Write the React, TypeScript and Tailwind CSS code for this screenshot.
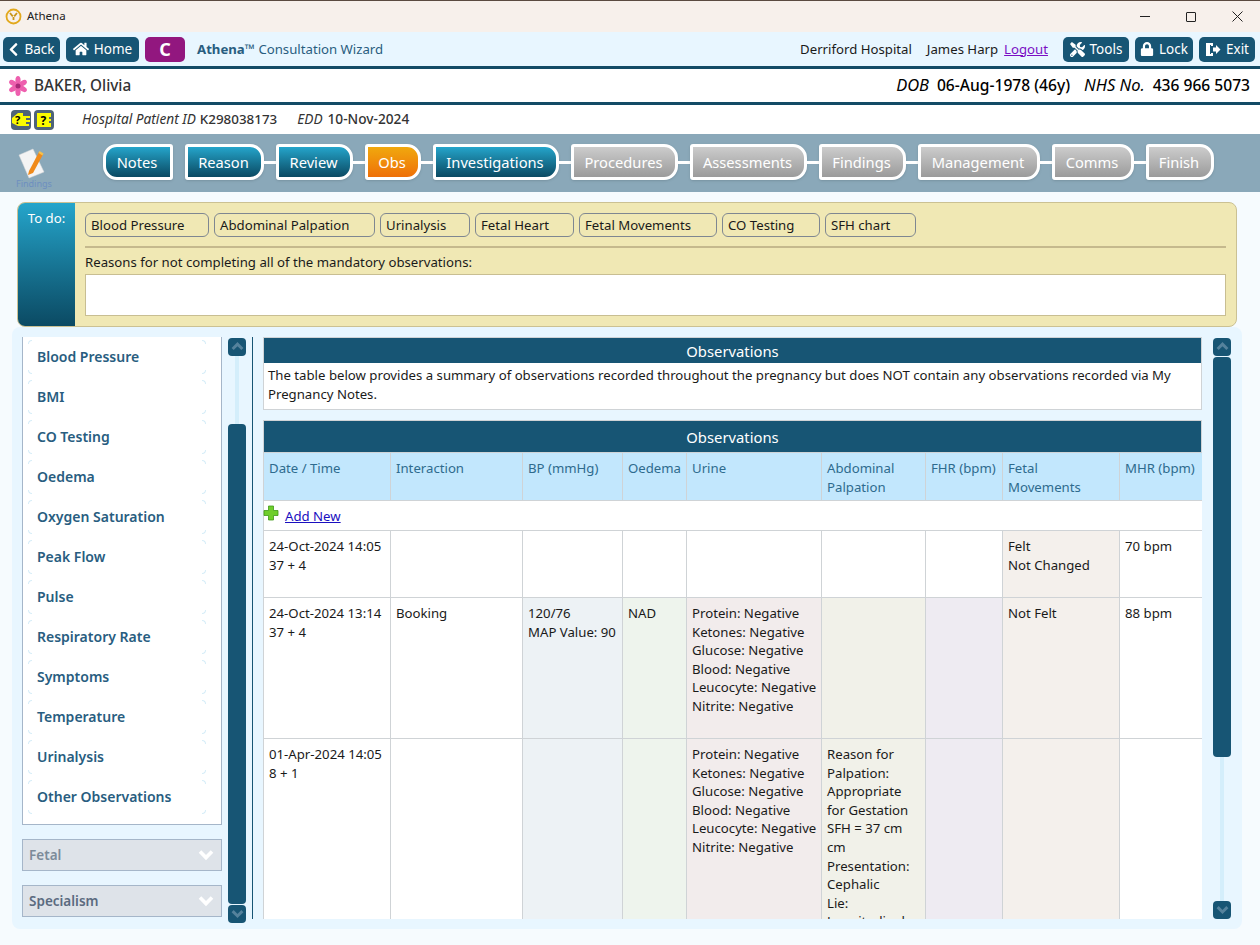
import React from 'react'
import { FaChevronLeft, FaHome, FaTools, FaLock } from 'react-icons/fa'

const teal = 'bg-linear-to-b from-[#25a5cb] to-[#0b4a63]'
const gray = 'bg-linear-to-b from-[#cccccc] to-[#9b9b9b]'
const orange = 'bg-linear-to-b from-[#f0a80e] to-[#ee6f08]'

const steps = [
    { label: 'Notes', w: 'w-[70px]', bg: teal, round: 'rounded-l-[14px] rounded-r-[3px]', line: false },
    { label: 'Reason', w: 'w-[79px]', bg: teal, round: 'rounded-r-[14px] rounded-l-[3px]', line: false },
    { label: 'Review', w: 'w-[77px]', bg: teal, round: 'rounded-r-[14px] rounded-l-[3px]', line: true },
    { label: 'Obs', w: 'w-[56px]', bg: orange, round: 'rounded-r-[14px] rounded-l-[3px]', line: true },
    { label: 'Investigations', w: 'w-[126px]', bg: teal, round: 'rounded-r-[14px] rounded-l-[3px]', line: true },
    { label: 'Procedures', w: 'w-[107px]', bg: gray, round: 'rounded-r-[14px] rounded-l-[3px]', line: true },
    { label: 'Assessments', w: 'w-[117px]', bg: gray, round: 'rounded-r-[14px] rounded-l-[3px]', line: true },
    { label: 'Findings', w: 'w-[87px]', bg: gray, round: 'rounded-r-[14px] rounded-l-[3px]', line: true },
    { label: 'Management', w: 'w-[122px]', bg: gray, round: 'rounded-r-[14px] rounded-l-[3px]', line: true },
    { label: 'Comms', w: 'w-[82px]', bg: gray, round: 'rounded-r-[14px] rounded-l-[3px]', line: true },
    { label: 'Finish', w: 'w-[68px]', bg: gray, round: 'rounded-r-[14px] rounded-l-[3px]', line: true },
]

const todos = [
    { label: 'Blood Pressure', w: 'w-[124px]' },
    { label: 'Abdominal Palpation', w: 'w-[161px]' },
    { label: 'Urinalysis', w: 'w-[90px]' },
    { label: 'Fetal Heart', w: 'w-[99px]' },
    { label: 'Fetal Movements', w: 'w-[138px]' },
    { label: 'CO Testing', w: 'w-[98px]' },
    { label: 'SFH chart', w: 'w-[91px]' },
]

const sideItems = ['Blood Pressure', 'BMI', 'CO Testing', 'Oedema', 'Oxygen Saturation', 'Peak Flow', 'Pulse', 'Respiratory Rate', 'Symptoms', 'Temperature', 'Urinalysis', 'Other Observations']

const urine = ['Protein: Negative', 'Ketones: Negative', 'Glucose: Negative', 'Blood: Negative', 'Leucocyte: Negative', 'Nitrite: Negative']

const Lines = ({ items }: { items: string[] }) => (
    <>
        {items.map((t) => (
            <div key={t} className="whitespace-nowrap">{t}</div>
        ))}
    </>
)

const ToolBtn = ({ w, children }: { w: string; children: React.ReactNode }) => (
    <button className={`${w} h-[25px] flex items-center justify-center gap-[5px] rounded-[5px] bg-[#175574] text-white text-[13.5px]`}>
        {children}
    </button>
)

// heavy chevron used on the scroll buttons and accordions
const Chevron = ({ down, w, color }: { down?: boolean; w: number; color: string }) => (
    <svg width={w} height={w * 0.7} viewBox="0 0 16 11" fill="none" stroke={color} strokeWidth="3.6">
        <path d={down ? 'M2 2.500l6 6 6-6' : 'M2 8.500l6-6 6 6'} />
    </svg>
)

const ScrollBtn = ({ down }: { down?: boolean }) => (
    <div className="w-[18px] h-[18px] shrink-0 rounded-[4px] bg-[#175574] flex items-center justify-center">
        <Chevron down={down} w={13} color="#55829c" />
    </div>
)

const Corner = ({ pos }: { pos: string }) => (
    <span className={`absolute w-[4px] h-[4px] border-[#d6edf8] ${pos}`} />
)

const SideItem = ({ label }: { label: string }) => (
    <div className="relative h-[34px] mb-[6px] ml-[5px] mr-[15px] pl-[9px] flex items-center text-[14px] font-semibold whitespace-nowrap text-[#285d80]">
        <Corner pos="top-0 left-0 border-t border-l rounded-tl-[4px]" />
        <Corner pos="top-0 right-0 border-t border-r rounded-tr-[4px]" />
        <Corner pos="bottom-0 left-0 border-b border-l rounded-bl-[4px]" />
        <Corner pos="bottom-0 right-0 border-b border-r rounded-br-[4px]" />
        {label}
    </div>
)

const Accordion = ({ label, color }: { label: string; color: string }) => (
    <div className={`h-[32px] mt-[14px] pl-[6px] pr-[7px] flex items-center justify-between bg-[#dee3e9] border border-[#a5b6c9] text-[13.5px] font-semibold ${color}`}>
        {label}
        <Chevron down w={16} color="#ffffff" />
    </div>
)

const th = 'border border-[#cfd3d6] px-[5px] pt-[6px] align-top font-normal text-left text-[#2e6b8e]'
const td = 'border border-[#cfd3d6] px-[5px] pt-[6px] align-top'

const App = () => {
    return (
        <div className="w-[1260px] h-[945px] overflow-hidden flex flex-col bg-[#f6fbfe] text-[13.2px] leading-[18.6px] text-[#1a1a1a] font-['Noto_Sans',sans-serif]">
            {/* title bar */}
            <div className="h-[32px] shrink-0 flex items-center bg-[#f7f0eb] border-t border-[#5b4a40] pl-[5px]">
                <svg width="17" height="17" viewBox="0 0 17 17" fill="none">
                    <circle cx="8.500" cy="8.500" r="7" stroke="#e2a81c" strokeWidth="1.800" />
                    <path d="M5 5l2.800 3.400M12 5L9.200 8.400M8.500 9v3" stroke="#c89416" strokeWidth="1.800" />
                </svg>
                <span className="ml-[5px] text-[11.5px] text-[#222]">Athena</span>
                <div className="ml-auto flex items-center text-[#222]">
                    <div className="w-[46px] flex justify-center"><div className="w-[10px] h-px bg-[#222]" /></div>
                    <div className="w-[46px] flex justify-center"><div className="w-[10px] h-[10px] border border-[#222] rounded-[1px]" /></div>
                    <div className="w-[46px] flex justify-center">
                        <svg width="11" height="11" viewBox="0 0 11 11" stroke="#222" strokeWidth="1"><path d="M.5.5l10 10M10.500.5l-10 10" /></svg>
                    </div>
                </div>
            </div>

            {/* toolbar */}
            <div className="h-[37px] shrink-0 flex items-center bg-[#e8f6ff] border-b-[3px] border-[#134b66] pl-[3px] pr-[5px]">
                <ToolBtn w="w-[57px]"><FaChevronLeft size={15} className="-mx-[2px]" />Back</ToolBtn>
                <div className="w-[6px]" />
                <ToolBtn w="w-[73px]"><FaHome size={16} />Home</ToolBtn>
                <div className="w-[6px]" />
                <button className="w-[40px] h-[25px] rounded-[5px] bg-[#92177f] text-white text-[18px] font-bold">C</button>
                <div className="ml-[12px] text-[#285d80]"><b className="font-bold">Athena™</b> Consultation Wizard</div>
                <div className="ml-auto">Derriford Hospital</div>
                <div className="ml-[15px]">James Harp</div>
                <a href="#" className="ml-[6px] mr-[15px] underline text-[#7a0fc4]">Logout</a>
                <ToolBtn w="w-[66px]"><FaTools size={15} />Tools</ToolBtn>
                <div className="w-[6px]" />
                <ToolBtn w="w-[58px]"><FaLock size={14} />Lock</ToolBtn>
                <div className="w-[6px]" />
                <ToolBtn w="w-[56px]">
                    <svg width="16" height="15" viewBox="0 0 16 15" fill="white">
                        <path d="M1 1h7v3H6V3H3.500v9H6v-1h2v3H1z" />
                        <path d="M2 2l3-1v13l-3-1z" />
                        <path d="M8 5.500h3V3l4.500 4.500L11 12V9.500H8z" />
                    </svg>
                    Exit
                </ToolBtn>
            </div>

            {/* patient */}
            <div className="h-[36px] shrink-0 flex items-center bg-white border-b-[3px] border-[#134b66] pl-[8px] pr-[10px] text-[15.6px]">
                <svg width="20" height="20" viewBox="0 0 20 20">
                    <g fill="#ee5fae">
                        <ellipse cx="10" cy="4.500" rx="2.600" ry="4.500" />
                        <ellipse cx="10" cy="4.500" rx="2.600" ry="4.500" transform="rotate(60 10 10)" />
                        <ellipse cx="10" cy="4.500" rx="2.600" ry="4.500" transform="rotate(120 10 10)" />
                        <ellipse cx="10" cy="4.500" rx="2.600" ry="4.500" transform="rotate(180 10 10)" />
                        <ellipse cx="10" cy="4.500" rx="2.600" ry="4.500" transform="rotate(240 10 10)" />
                        <ellipse cx="10" cy="4.500" rx="2.600" ry="4.500" transform="rotate(300 10 10)" />
                    </g>
                    <circle cx="10" cy="10" r="2.500" fill="#a82a78" />
                </svg>
                <span className="ml-[6px] text-[15.3px] font-medium text-[#333]">BAKER, Olivia</span>
                <div className="ml-auto flex items-center text-black">
                    <i className="mr-[8px] text-[16.5px]">DOB</i>
                    <span className="font-medium">06-Aug-1978 (46y)</span>
                    <i className="ml-[14px] mr-[8px] text-[16.5px]">NHS No.</i>
                    <span className="font-medium">436 966 5073</span>
                </div>
            </div>

            {/* info row */}
            <div className="h-[29px] shrink-0 flex items-center bg-white pl-[11px] text-[13.7px]">
                <svg width="20" height="20" viewBox="0 0 20 20">
                    <rect width="20" height="20" rx="4" fill="#4f6478" />
                    <path d="M1 8l6-5h5v3h7v2h-4v2h4v2h-4v2h3v2H7l-6-3z" fill="#fbfb00" />
                    <text x="4" y="14" fontSize="11" fontWeight="700" fill="#000">?</text>
                </svg>
                <svg width="20" height="20" viewBox="0 0 20 20" className="ml-[3px]">
                    <rect width="20" height="20" rx="4" fill="#4f6478" />
                    <path d="M3 3h14v4h-2v2h2v2h-2v2h2v4H3z" fill="#fbfb00" />
                    <text x="6.500" y="14.500" fontSize="12" fontWeight="700" fill="#000">?</text>
                </svg>
                <i className="ml-[28px] text-[#333]">Hospital Patient ID</i>
                <span className="ml-[4px] text-[13.4px] font-medium text-[#333]">K298038173</span>
                <i className="ml-[20px] text-[#333]">EDD</i>
                <span className="ml-[5px] font-medium text-[#333]">10-Nov-2024</span>
            </div>

            {/* wizard steps */}
            <div className="h-[58px] shrink-0 flex bg-[#8aa8b9] pl-[15px]">
                <div className="w-[88px] shrink-0 pt-[12px]">
                    <svg width="34" height="34" viewBox="0 0 34 34">
                        <path d="M4 9L18 3l11 23-15 6z" fill="#f4f4f4" stroke="#d8d8d8" strokeWidth=".5" />
                        <path d="M14 25L24 6l4 2.500L18 27l-5 2z" fill="#f08a1a" />
                        <path d="M23.500 7l1-2 4 2.500-1 2z" fill="#f6c04a" />
                    </svg>
                    <div className="ml-px text-[9px] leading-[10px] -mt-[1px] text-[#6d8fc0]">Findings</div>
                </div>
                <div className="flex items-start pt-[10px]">
                    {steps.map((s) => (
                        <React.Fragment key={s.label}>
                            <div className={`w-[12px] h-[3px] mt-[17px] ${s.line ? 'bg-white' : 'bg-transparent'} ${s.label === 'Notes' ? 'hidden' : ''}`} />
                            <div className={`${s.w} h-[36px] pr-[2px] flex items-center justify-center border-[3px] border-white shadow-sm text-white text-[14.7px] ${s.bg} ${s.round}`}>
                                {s.label}
                            </div>
                        </React.Fragment>
                    ))}
                </div>
            </div>

            {/* to do */}
            <div className="h-[125px] shrink-0 mt-[10px] ml-[17px] mr-[23px] flex rounded-[8px] overflow-hidden border border-[#cbc193] bg-[#f0e8b4]">
                <div className={`w-[57px] shrink-0 pt-[6px] text-center text-white ${teal}`}>To do:</div>
                <div className="flex-1 pl-[10px] pr-[10px] pt-[10px]">
                    <div className="flex gap-[5px]">
                        {todos.map((t) => (
                            <div key={t.label} className={`${t.w} h-[24px] pl-[5px] flex items-center rounded-[6px] border border-[#7f8791] text-[#1a1a1a]`}>
                                {t.label}
                            </div>
                        ))}
                    </div>
                    <div className="h-[2px] mt-[9px] bg-[#c5b98d]" />
                    <div className="mt-[3px] h-[23px] flex items-center">Reasons for not completing all of the mandatory observations:</div>
                    <div className="h-[42px] bg-white border border-[#c8be92]" />
                </div>
            </div>

            {/* main panel */}
            <div className="flex-1 min-h-0 ml-[12px] mr-[18px] mb-[16px] flex bg-[#e8f6ff] rounded-[8px] pt-[10px] pl-[10px]">
                <div className="w-[200px] shrink-0 flex flex-col">
                    <div className="h-[488px] pt-[3px] bg-white border-x border-b border-[#a5b6c9] overflow-hidden">
                        {sideItems.map((s) => (
                            <SideItem key={s} label={s} />
                        ))}
                    </div>
                    <Accordion label="Fetal" color="text-[#7c8b9a]" />
                    <Accordion label="Specialism" color="text-[#5b6b80]" />
                </div>

                <div className="w-[18px] shrink-0 ml-[6px] mt-px h-[585px] flex flex-col items-center">
                    <ScrollBtn />
                    <div className="w-[4px] h-[68px] bg-[#d4eefb]" />
                    <div className="w-[18px] h-[480px] rounded-[4px] bg-[#175574]" />
                    <div className="h-px" />
                    <ScrollBtn down />
                </div>

                <div className="w-px shrink-0 ml-[6px] h-[582px] bg-[#175574]" />

                <div className="w-[939px] shrink-0 ml-[10px] h-[582px] overflow-hidden">
                    <div className="bg-white border border-[#cfd3d6]">
                        <div className="h-[25px] bg-[#175574] text-white text-center text-[14.8px] leading-[27px]">Observations</div>
                        <div className="px-[4px] pt-[3px] h-[46px]">
                            The table below provides a summary of observations recorded throughout the pregnancy but does NOT contain any observations recorded via My Pregnancy Notes.
                        </div>
                    </div>

                    <div className="mt-[10px] bg-white">
                        <div className="h-[32px] bg-[#175574] border border-[#cfd3d6] border-b-0 text-white text-center text-[14.8px] leading-[33px]">Observations</div>
                        <table className="w-[939px] table-fixed border-collapse">
                            <colgroup>
                                <col className="w-[127px]" />
                                <col className="w-[132px]" />
                                <col className="w-[100px]" />
                                <col className="w-[64px]" />
                                <col className="w-[135px]" />
                                <col className="w-[104px]" />
                                <col className="w-[77px]" />
                                <col className="w-[117px]" />
                                <col className="w-[83px]" />
                            </colgroup>
                            <thead>
                                <tr className="h-[48px] bg-[#c2e7fd]">
                                    <th className={th}>Date / Time</th>
                                    <th className={th}>Interaction</th>
                                    <th className={th}>BP (mmHg)</th>
                                    <th className={th}>Oedema</th>
                                    <th className={th}>Urine</th>
                                    <th className={th}>Abdominal Palpation</th>
                                    <th className={th}>FHR (bpm)</th>
                                    <th className={th}>Fetal<br />Movements</th>
                                    <th className={th}>MHR (bpm)</th>
                                </tr>
                            </thead>
                            <tbody>
                                <tr className="h-[30px]">
                                    <td colSpan={9} className="border border-[#cfd3d6]">
                                        <div className="flex items-center pt-px">
                                            <svg width="16" height="16" viewBox="0 0 16 16" className="-mt-[6px] -ml-px">
                                                <path d="M5.500 1h5v4.500H15v5h-4.500V15h-5v-4.500H1v-5h4.500z" fill="#6fce2c" stroke="#3f9a18" strokeWidth=".8" />
                                            </svg>
                                            <a href="#" className="ml-[6px] underline text-[#1a0fbf]">Add New</a>
                                        </div>
                                    </td>
                                </tr>
                                <tr className="h-[67px]">
                                    <td className={td}><div>24-Oct-2024 14:05</div><div>37 + 4</div></td>
                                    <td className={td} />
                                    <td className={td} />
                                    <td className={td} />
                                    <td className={td} />
                                    <td className={td} />
                                    <td className={td} />
                                    <td className={`${td} bg-[#f4f0ec]`}><div>Felt</div><div>Not Changed</div></td>
                                    <td className={td}>70 bpm</td>
                                </tr>
                                <tr className="h-[141px]">
                                    <td className={td}><div>24-Oct-2024 13:14</div><div>37 + 4</div></td>
                                    <td className={td}>Booking</td>
                                    <td className={`${td} bg-[#edf2f5]`}><div>120/76</div><div>MAP Value: 90</div></td>
                                    <td className={`${td} bg-[#eef4ed]`}>NAD</td>
                                    <td className={`${td} bg-[#f2ecec]`}><Lines items={urine} /></td>
                                    <td className={`${td} bg-[#f1f1e9]`} />
                                    <td className={`${td} bg-[#eeebf2]`} />
                                    <td className={`${td} bg-[#f4f0ec]`}>Not Felt</td>
                                    <td className={td}>88 bpm</td>
                                </tr>
                                <tr className="h-[260px]">
                                    <td className={td}><div>01-Apr-2024 14:05</div><div>8 + 1</div></td>
                                    <td className={td} />
                                    <td className={`${td} bg-[#edf2f5]`} />
                                    <td className={`${td} bg-[#eef4ed]`} />
                                    <td className={`${td} bg-[#f2ecec]`}><Lines items={urine} /></td>
                                    <td className={`${td} bg-[#f1f1e9]`}>
                                        <div>Reason for Palpation: Appropriate for Gestation</div>
                                        <div>SFH = 37 cm cm</div>
                                        <div>Presentation: Cephalic</div>
                                        <div>Lie: Longitudinal</div>
                                    </td>
                                    <td className={`${td} bg-[#eeebf2]`} />
                                    <td className={`${td} bg-[#f4f0ec]`} />
                                    <td className={td} />
                                </tr>
                            </tbody>
                        </table>
                    </div>
                </div>

                <div className="w-[18px] shrink-0 ml-[11px] mt-px h-[581px] flex flex-col items-center">
                    <ScrollBtn />
                    <div className="h-px" />
                    <div className="w-[18px] h-[400px] rounded-[4px] bg-[#175574]" />
                    <div className="w-[4px] flex-1 bg-[#d4eefb]" />
                    <ScrollBtn down />
                </div>
            </div>
        </div>
    )
}

export default App
